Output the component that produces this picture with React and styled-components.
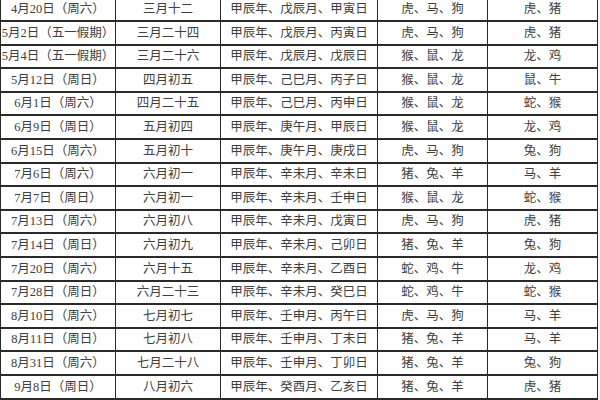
import styled, { createGlobalStyle } from 'styled-components'

const GlobalStyle = createGlobalStyle`
  html, body {
    margin: 0;
    padding: 0;
    background: #ffffff;
    overflow: hidden;
  }
`

const Page = styled.div`
  width: 600px;
  height: 400px;
  overflow: hidden;
`

const Table = styled.table`
  margin-top: -3.5px;
  width: 597px;
  border-collapse: collapse;
  table-layout: fixed;
  font-family: 'Liberation Serif', 'Noto Sans CJK SC', serif;
  font-size: 12.5px;
  color: #404040;
`

const Cell = styled.td`
  height: 21.6px;
  padding: 0;
  border: 1.5px solid #2a2a2a;
  border-top-width: 2px;
  border-bottom-width: 2px;
  text-align: center;
  vertical-align: middle;
  white-space: nowrap;
  line-height: 1;
`

const widths = [115, 105, 157, 110, 110]

const rows = [
  ['4月20日（周六）', '三月十二', '甲辰年、戊辰月、甲寅日', '虎、马、狗', '虎、猪'],
  ['5月2日（五一假期）', '三月二十四', '甲辰年、戊辰月、丙寅日', '虎、马、狗', '虎、猪'],
  ['5月4日（五一假期）', '三月二十六', '甲辰年、戊辰月、戊辰日', '猴、鼠、龙', '龙、鸡'],
  ['5月12日（周日）', '四月初五', '甲辰年、己巳月、丙子日', '猴、鼠、龙', '鼠、牛'],
  ['6月1日（周六）', '四月二十五', '甲辰年、己巳月、丙申日', '猴、鼠、龙', '蛇、猴'],
  ['6月9日（周日）', '五月初四', '甲辰年、庚午月、甲辰日', '猴、鼠、龙', '龙、鸡'],
  ['6月15日（周六）', '五月初十', '甲辰年、庚午月、庚戌日', '虎、马、狗', '兔、狗'],
  ['7月6日（周六）', '六月初一', '甲辰年、辛未月、辛未日', '猪、兔、羊', '马、羊'],
  ['7月7日（周日）', '六月初一', '甲辰年、辛未月、壬申日', '猴、鼠、龙', '蛇、猴'],
  ['7月13日（周六）', '六月初八', '甲辰年、辛未月、戊寅日', '虎、马、狗', '虎、猪'],
  ['7月14日（周日）', '六月初九', '甲辰年、辛未月、己卯日', '猪、兔、羊', '兔、狗'],
  ['7月20日（周六）', '六月十五', '甲辰年、辛未月、乙酉日', '蛇、鸡、牛', '龙、鸡'],
  ['7月28日（周日）', '六月二十三', '甲辰年、辛未月、癸巳日', '蛇、鸡、牛', '蛇、猴'],
  ['8月10日（周六）', '七月初七', '甲辰年、壬申月、丙午日', '虎、马、狗', '马、羊'],
  ['8月11日（周日）', '七月初八', '甲辰年、壬申月、丁未日', '猪、兔、羊', '马、羊'],
  ['8月31日（周六）', '七月二十八', '甲辰年、壬申月、丁卯日', '猪、兔、羊', '兔、狗'],
  ['9月8日（周日）', '八月初六', '甲辰年、癸酉月、乙亥日', '猪、兔、羊', '虎、猪'],
  ['', '', '', '', ''],
]

export default function App() {
  return (
    <Page>
      <GlobalStyle />
      <Table>
        <colgroup>
          {widths.map((w, i) => <col key={i} style={{ width: w }} />)}
        </colgroup>
        <tbody>
          {rows.map((row, r) => (
            <tr key={r}>
              {row.map((text, c) => <Cell key={c}>{text}</Cell>)}
            </tr>
          ))}
        </tbody>
      </Table>
    </Page>
  )
}
